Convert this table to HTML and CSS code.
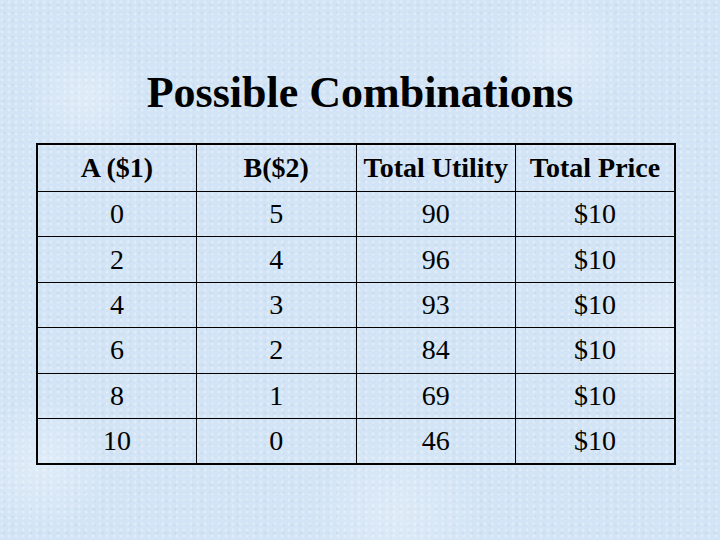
FILE: index.html
```html
<!DOCTYPE html>
<html lang="en">
<head>
<meta charset="utf-8">
<title>Possible Combinations</title>
<link rel="stylesheet" href="styles.css">
</head>
<body>
<main class="slide">
  <h1 class="title">Possible Combinations</h1>
  <table class="combos">
    <thead>
      <tr><th>A ($1)</th><th>B($2)</th><th>Total Utility</th><th>Total Price</th></tr>
    </thead>
    <tbody>
      <tr><td>0</td><td>5</td><td>90</td><td>$10</td></tr>
      <tr><td>2</td><td>4</td><td>96</td><td>$10</td></tr>
      <tr><td>4</td><td>3</td><td>93</td><td>$10</td></tr>
      <tr><td>6</td><td>2</td><td>84</td><td>$10</td></tr>
      <tr><td>8</td><td>1</td><td>69</td><td>$10</td></tr>
      <tr><td>10</td><td>0</td><td>46</td><td>$10</td></tr>
    </tbody>
  </table>
</main>
</body>
</html>
```
FILE: styles.css
```css
html, body {
  margin: 0;
  padding: 0;
}
body {
  width: 720px;
  height: 540px;
  overflow: hidden;
  font-family: "Liberation Serif", "Times New Roman", serif;
  color: #000;
}
.slide {
  width: 720px;
  height: 540px;
  box-sizing: border-box;
  padding-top: 69px;
  background-color: #d2e4f5;
  background-image:
    radial-gradient(circle at 12% 18%, rgba(255,255,255,0.3) 0, rgba(255,255,255,0) 60px),
    radial-gradient(circle at 78% 10%, rgba(255,255,255,0.25) 0, rgba(255,255,255,0) 70px),
    radial-gradient(circle at 92% 62%, rgba(255,255,255,0.25) 0, rgba(255,255,255,0) 80px),
    radial-gradient(circle at 6% 86%, rgba(255,255,255,0.3) 0, rgba(255,255,255,0) 70px),
    radial-gradient(circle at 55% 95%, rgba(255,255,255,0.25) 0, rgba(255,255,255,0) 90px),
    radial-gradient(circle at 2px 2px, rgba(255,255,255,0.3) 1px, rgba(255,255,255,0) 2px),
    radial-gradient(circle at 4px 5px, rgba(175,205,232,0.25) 1px, rgba(175,205,232,0) 2px);
  background-size: auto, auto, auto, auto, auto, 7px 6px, 9px 8px;
}
.title {
  margin: 0;
  font-size: 44px;
  line-height: 48px;
  font-weight: bold;
  text-align: center;
}
.combos {
  margin: 26px 0 0 36px;
  width: 640px;
  border-collapse: collapse;
  border: 2px solid #000;
  table-layout: fixed;
}
.combos th,
.combos td {
  border: 1px solid #000;
  padding: 0;
  text-align: center;
  vertical-align: middle;
  font-size: 28px;
  line-height: 32px;
}
.combos th {
  height: 46px;
  font-weight: bold;
}
.combos td {
  height: 44.4px;
  font-weight: normal;
}
```
